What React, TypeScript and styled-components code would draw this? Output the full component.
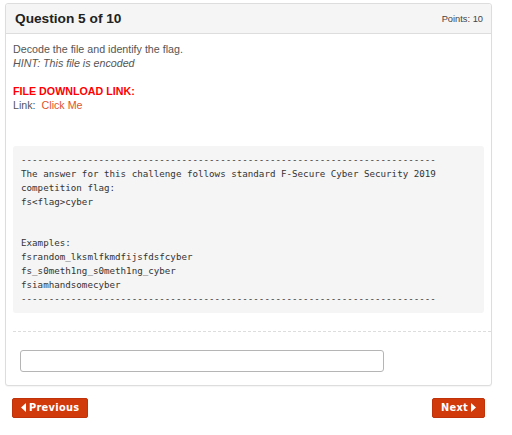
import styled, { createGlobalStyle } from "styled-components";

const GlobalStyle = createGlobalStyle`
  html, body {
    margin: 0;
    padding: 0;
    background: #ffffff;
  }
  body {
    font-family: "Liberation Sans", Arial, sans-serif;
  }
`;

const Page = styled.div`
  padding: 3px 20px 0 5px;
  box-sizing: border-box;
  width: 512px;
`;

const Panel = styled.section`
  border: 1px solid #dddddd;
  border-radius: 3px;
  background: #ffffff;
  box-shadow: 0 1px 1px rgba(0, 0, 0, 0.04);
`;

const Header = styled.header`
  display: flex;
  align-items: center;
  justify-content: space-between;
  height: 29px;
  padding: 0 8px 0 9px;
  background: #f5f5f5;
  border-bottom: 1px solid #dddddd;
  border-radius: 3px 3px 0 0;
`;

const Title = styled.h3`
  margin: 0;
  font-size: 13.7px;
  font-weight: bold;
  color: #222222;
`;

const Points = styled.span`
  font-size: 9.3px;
  color: #444444;
`;

const Body = styled.div`
  padding: 8px 0 13px 7px;
  font-size: 10.7px;
  line-height: 14px;
  color: #555555;
`;

const Line = styled.div<{ $gap?: number }>`
  margin-top: ${({ $gap }) => $gap ?? 0}px;
`;

const Hint = styled(Line)`
  font-style: italic;
`;

const Alert = styled(Line)`
  color: #ff0000;
  font-weight: bold;
`;

const ClickLink = styled.a`
  margin-left: 3px;
  color: #e0522e;
  text-decoration: none;
`;

const Code = styled.pre`
  margin: 34px 7px 0 0;
  padding: 7px 8px;
  background: #f5f5f5;
  border-radius: 3px;
  font-family: "DejaVu Sans Mono", "Liberation Mono", monospace;
  font-size: 9.2px;
  line-height: 13.9px;
  color: #333333;
  white-space: pre;
  overflow: hidden;
`;

const Divider = styled.hr`
  margin: 18px 0 0 0;
  border: 0;
  border-top: 1px dashed #dddddd;
`;

const AnswerInput = styled.input`
  display: block;
  margin: 18px 0 0 7px;
  width: 364px;
  height: 22px;
  box-sizing: border-box;
  border: 1px solid #b5b5b5;
  border-radius: 3px;
  background: #ffffff;
  outline: none;
`;

const Nav = styled.nav`
  display: flex;
  justify-content: space-between;
  margin: 12px 7px 0 7px;
`;

const NavButton = styled.button`
  display: flex;
  align-items: center;
  gap: 3px;
  height: 20px;
  padding: 0 8px 0 8px;
  background: #d13a0b;
  border: 1px solid #bf320a;
  border-radius: 2px;
  color: #ffffff;
  font-family: "DejaVu Sans", Verdana, sans-serif;
  font-weight: bold;
  font-size: 9.8px;
  letter-spacing: 0.3px;
  cursor: pointer;
`;

const Caret = ({ dir }: { dir: "left" | "right" }) => (
  <svg width="5" height="9" viewBox="0 0 5 9">
    {dir === "left" ? (
      <polygon points="5,0 0,4.5 5,9" fill="#ffffff" />
    ) : (
      <polygon points="0,0 5,4.5 0,9" fill="#ffffff" />
    )}
  </svg>
);

const dashes = "-".repeat(75);

const codeText = [
  dashes,
  "The answer for this challenge follows standard F-Secure Cyber Security 2019",
  "competition flag:",
  "fs<flag>cyber",
  "",
  "",
  "Examples:",
  "fsrandom_lksmlfkmdfijsfdsfcyber",
  "fs_s0meth1ng_s0meth1ng_cyber",
  "fsiamhandsomecyber",
  dashes,
].join("\n");

export default function App() {
  return (
    <Page>
      <GlobalStyle />
      <Panel>
        <Header>
          <Title>Question 5 of 10</Title>
          <Points>Points: 10</Points>
        </Header>
        <Body>
          <Line>Decode the file and identify the flag.</Line>
          <Hint>HINT: This file is encoded</Hint>
          <Alert $gap={14}>FILE DOWNLOAD LINK:</Alert>
          <Line>
            Link: <ClickLink href="#">Click Me</ClickLink>
          </Line>
          <Code>{codeText}</Code>
          <Divider />
          <AnswerInput type="text" />
        </Body>
      </Panel>
      <Nav>
        <NavButton>
          <Caret dir="left" />
          Previous
        </NavButton>
        <NavButton>
          Next
          <Caret dir="right" />
        </NavButton>
      </Nav>
    </Page>
  );
}
